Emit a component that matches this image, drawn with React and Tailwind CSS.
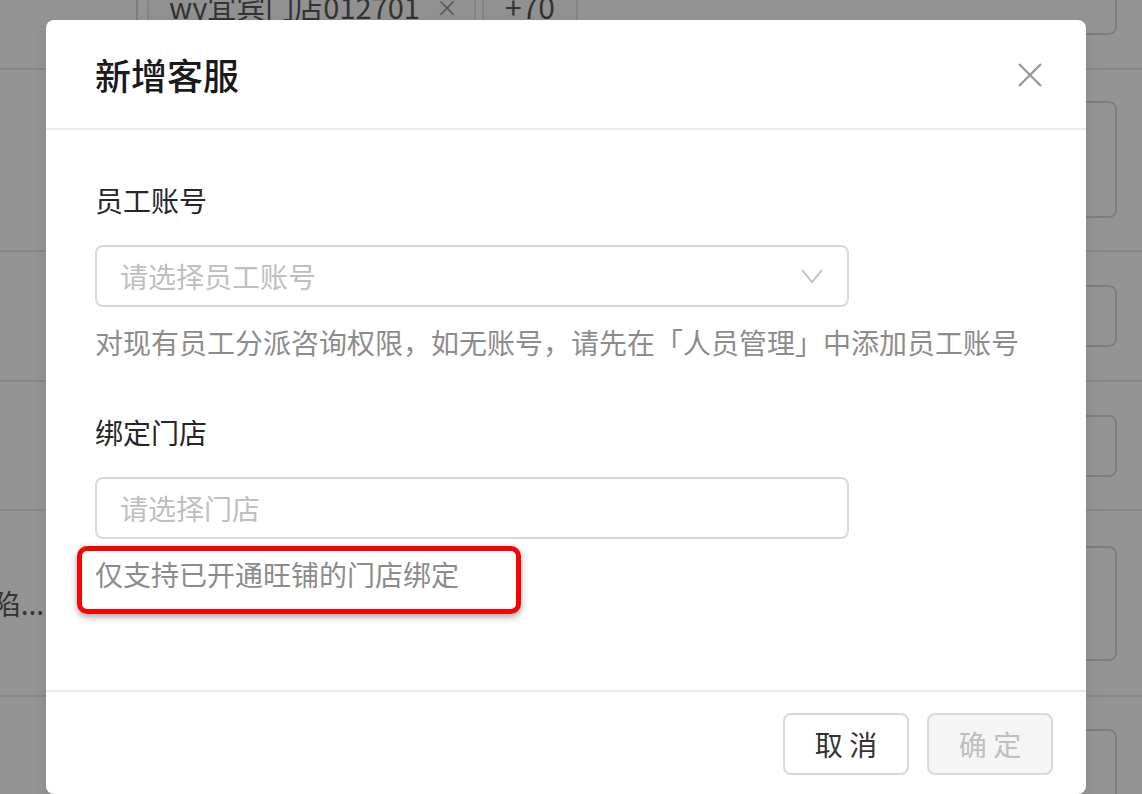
export default function App() {
  return (
    <div className="relative w-[1142px] h-[794px] overflow-hidden bg-white font-['Noto_Sans_CJK_SC','Noto_Sans',sans-serif]">
      {/* underlying page */}
      <div className="flex flex-col -mt-[30px] text-[28px] text-[#595959]">
        <div className="h-[100px] border-b-2 border-[#e8e8e8] flex pl-[136px] pr-[25px]">
          <div className="h-[65px] flex-1 border-2 border-[#d9d9d9] rounded-[8px] flex items-start gap-[6px] pl-[9px] pt-[15px]">
            <div className="h-[38px] pl-[20px] pr-[16px] border-2 border-[#e3e3e3] rounded-[4px] bg-[#fafafa] flex items-center gap-[16px] text-[29px] leading-[29px] whitespace-nowrap">
              <span>wy宜宾门店012701</span>
              <span className="text-[22px] text-[#999]">×</span>
            </div>
            <div className="h-[38px] w-[96px] border-2 border-[#e3e3e3] rounded-[4px] bg-[#fafafa] flex items-center justify-center text-[30px] leading-[29px]">+70</div>
          </div>
        </div>
        <div className="h-[182px] border-b-2 border-[#e8e8e8] flex pl-[136px] pr-[25px] pt-[31px]">
          <div className="h-[117px] flex-1 border-2 border-[#d9d9d9] rounded-[8px]" />
        </div>
        <div className="h-[130px] border-b-2 border-[#e8e8e8] flex pl-[136px] pr-[25px] pt-[33px]">
          <div className="h-[62px] flex-1 border-2 border-[#d9d9d9] rounded-[8px]" />
        </div>
        <div className="h-[129px] border-b-2 border-[#e8e8e8] flex pl-[136px] pr-[25px] pt-[33px]">
          <div className="h-[62px] flex-1 border-2 border-[#d9d9d9] rounded-[8px]" />
        </div>
        <div className="h-[186px] border-b-2 border-[#e8e8e8] flex pr-[25px]">
          <div className="w-[136px] flex items-center">
            <div className="w-[44px] overflow-hidden flex justify-end whitespace-nowrap">产品缺陷...</div>
          </div>
          <div className="flex-1 pt-[35px]">
            <div className="h-[115px] border-2 border-[#d9d9d9] rounded-[8px]" />
          </div>
        </div>
        <div className="h-[120px] flex pl-[136px] pr-[25px] pt-[32px]">
          <div className="h-[80px] flex-1 border-2 border-[#d9d9d9] rounded-[8px]" />
        </div>
      </div>

      {/* mask */}
      <div className="absolute inset-0 bg-black/[0.42]" />

      {/* modal */}
      <div className="absolute left-[46px] top-[20px] w-[1040px] h-[774px] bg-white rounded-[8px] flex flex-col shadow-[0_6px_16px_rgba(0,0,0,0.08)]">
        <div className="h-[110px] shrink-0 pl-[49px] pr-[44px] flex items-center justify-between border-b-2 border-[#ebebeb]">
          <div className="text-[36px] leading-[44px] font-medium text-[#1a1a1a]">新增客服</div>
          <svg width="24" height="24" viewBox="0 0 24 24" className="mt-[2px]">
            <path d="M1 1L23 23M23 1L1 23" stroke="#999" strokeWidth="2.4" fill="none" />
          </svg>
        </div>

        <div className="relative flex-1 px-[49px] pt-[48px] text-[28px]">
          <div className="leading-[44px] text-[#262626]">员工账号</div>
          <div className="mt-[23px] w-[754px] h-[62px] border-2 border-[#d9d9d9] rounded-[8px] flex items-center justify-between pl-[23px] pr-[24px]">
            <span className="text-[#bfbfbf] leading-[44px]">请选择员工账号</span>
            <svg width="22" height="16" viewBox="0 0 22 16">
              <path d="M1 2L11 14L21 2" stroke="#bfbfbf" strokeWidth="1.8" fill="none" />
            </svg>
          </div>
          <div className="mt-[13px] leading-[44px] text-[#8c8c8c] whitespace-nowrap">对现有员工分派咨询权限，如无账号，请先在「人员管理」中添加员工账号</div>

          <div className="mt-[46px] leading-[44px] text-[#262626]">绑定门店</div>
          <div className="mt-[23px] w-[754px] h-[62px] border-2 border-[#d9d9d9] rounded-[8px] flex items-center pl-[23px] pr-[24px]">
            <span className="text-[#bfbfbf] leading-[44px]">请选择门店</span>
          </div>
          <div className="mt-[13px] leading-[44px] text-[#8c8c8c]">仅支持已开通旺铺的门店绑定</div>

          <div className="absolute left-[31px] top-[416px] w-[444px] h-[68px] border-[5px] border-[#ff0000] rounded-[10px] shadow-[0_3px_7px_rgba(0,0,0,0.35)]" />
        </div>

        <div className="h-[104px] shrink-0 border-t-2 border-[#ebebeb] flex justify-end items-start gap-[18px] pr-[33px] pt-[21px]">
          <div className="w-[126px] h-[62px] border-2 border-[#d9d9d9] rounded-[8px] bg-white flex items-center justify-center text-[28px] text-[#333]">取 消</div>
          <div className="w-[126px] h-[62px] border-2 border-[#d9d9d9] rounded-[8px] bg-[#f5f5f5] flex items-center justify-center text-[28px] text-[#bfbfbf]">确 定</div>
        </div>
      </div>
    </div>
  );
}
